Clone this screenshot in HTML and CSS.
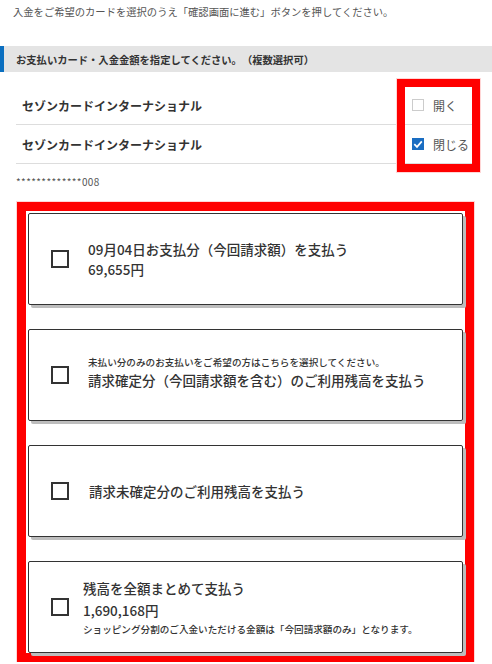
FILE: index.html
```html
<!DOCTYPE html>
<html lang="ja">
<head>
<meta charset="utf-8">
<title>入金カード選択</title>
<link rel="stylesheet" href="styles.css">
</head>
<body>
<p class="lead">入金をご希望のカードを選択のうえ「確認画面に進む」ボタンを押してください。</p>
<div class="section-head">お支払いカード・入金金額を指定してください。（複数選択可）</div>
<div class="card-rows">
  <div class="row">
    <span class="row-title">セゾンカードインターナショナル</span>
    <span class="toggle"><span class="box"></span>開く</span>
  </div>
  <div class="row">
    <span class="row-title">セゾンカードインターナショナル</span>
    <span class="toggle"><span class="box checked"><svg viewBox="0 0 12 12" width="12" height="12"><path d="M2.3 6.2 L5 8.9 L9.8 3.4" fill="none" stroke="#fff" stroke-width="1.7"/></svg></span>閉じる</span>
  </div>
  <div class="highlight"></div>
</div>
<div class="acct">*************008</div>
<div class="options">
  <div class="opt">
    <span class="check"></span>
    <div class="opt-text">
      <span>09月04日お支払分（今回請求額）を支払う</span>
      <span>69,655円</span>
    </div>
  </div>
  <div class="opt">
    <span class="check"></span>
    <div class="opt-text raise">
      <span class="note">未払い分のみのお支払いをご希望の方はこちらを選択してください。</span>
      <span>請求確定分（今回請求額を含む）のご利用残高を支払う</span>
    </div>
  </div>
  <div class="opt">
    <span class="check"></span>
    <div class="opt-text nudge">
      <span>請求未確定分のご利用残高を支払う</span>
    </div>
  </div>
  <div class="opt">
    <span class="check"></span>
    <div class="opt-text shift">
      <span class="tall">残高を全額まとめて支払う</span>
      <span class="tall">1,690,168円</span>
      <span class="note">ショッピング分割のご入金いただける金額は「今回請求額のみ」となります。</span>
    </div>
  </div>
</div>
</body>
</html>
```
FILE: styles.css
```css
html, body {
  margin: 0;
  padding: 0;
  background: #fff;
}
body {
  font-family: "Noto Sans CJK JP", "Noto Sans", sans-serif;
  color: #333;
  text-spacing-trim: space-all;
}
.lead {
  margin: 0;
  height: 46px;
  box-sizing: border-box;
  padding: 4px 13px 0;
  font-size: 10.3px;
  line-height: 16px;
  color: #555;
}
.section-head {
  height: 26px;
  box-sizing: border-box;
  display: flex;
  align-items: center;
  background: #e4e4e4;
  border-left: 4px solid #0b6fc0;
  padding-left: 12px;
  font-size: 10.3px;
  font-weight: bold;
  color: #333;
}
.card-rows {
  position: relative;
  margin: 14px 20px 0 16px;
}
.row {
  display: flex;
  justify-content: space-between;
  align-items: center;
  height: 39px;
  box-sizing: border-box;
  border-bottom: 1px solid #ddd;
}
.row-title {
  padding-left: 6px;
  font-size: 12px;
  font-weight: bold;
  color: #333;
}
.toggle {
  display: flex;
  align-items: center;
  gap: 9px;
  width: 60px;
  font-size: 12px;
  color: #555;
}
.box {
  width: 12px;
  height: 12px;
  box-sizing: border-box;
  border: 1px solid #ccc;
  background: #fff;
  display: flex;
}
.box.checked {
  background: #1a6dc2;
  border: none;
}
.highlight {
  position: absolute;
  left: 381px;
  top: -7px;
  width: 83px;
  height: 93px;
  box-sizing: border-box;
  border: 8px solid #ff0000;
  box-shadow: 0 0 0 1px #ffd6d6;
}
.acct {
  margin: 10px 16px 0;
  font-size: 10px;
  line-height: 16px;
  color: #555;
  letter-spacing: 0.4px;
}
.options {
  margin: 12px 0 0 17px;
  width: 457px;
  box-sizing: border-box;
  border: 9px solid #ff0000;
  padding: 2px 2px 0;
  display: flex;
  flex-direction: column;
  gap: 24px;
  box-shadow: 0 0 0 1px #ffd6d6;
}
.opt {
  height: 92px;
  box-sizing: border-box;
  border: 1px solid #333;
  border-radius: 2px;
  box-shadow: 3px 3px 0 #bdbdbd;
  display: flex;
  align-items: center;
  padding-left: 22px;
  background: #fff;
}
.check {
  flex: none;
  width: 18px;
  height: 18px;
  box-sizing: border-box;
  border: 2px solid #333;
  margin-right: 19px;
}
.opt-text {
  display: flex;
  flex-direction: column;
  font-size: 13.5px;
  font-weight: 500;
  line-height: 20px;
  color: #333;
}
.opt-text .note {
  font-size: 9.6px;
  line-height: 16px;
}
.opt-text .tall {
  line-height: 22px;
}
.raise {
  margin-bottom: 6px;
}
.nudge {
  margin-left: 1px;
}
.shift {
  margin-left: -5px;
}
```
